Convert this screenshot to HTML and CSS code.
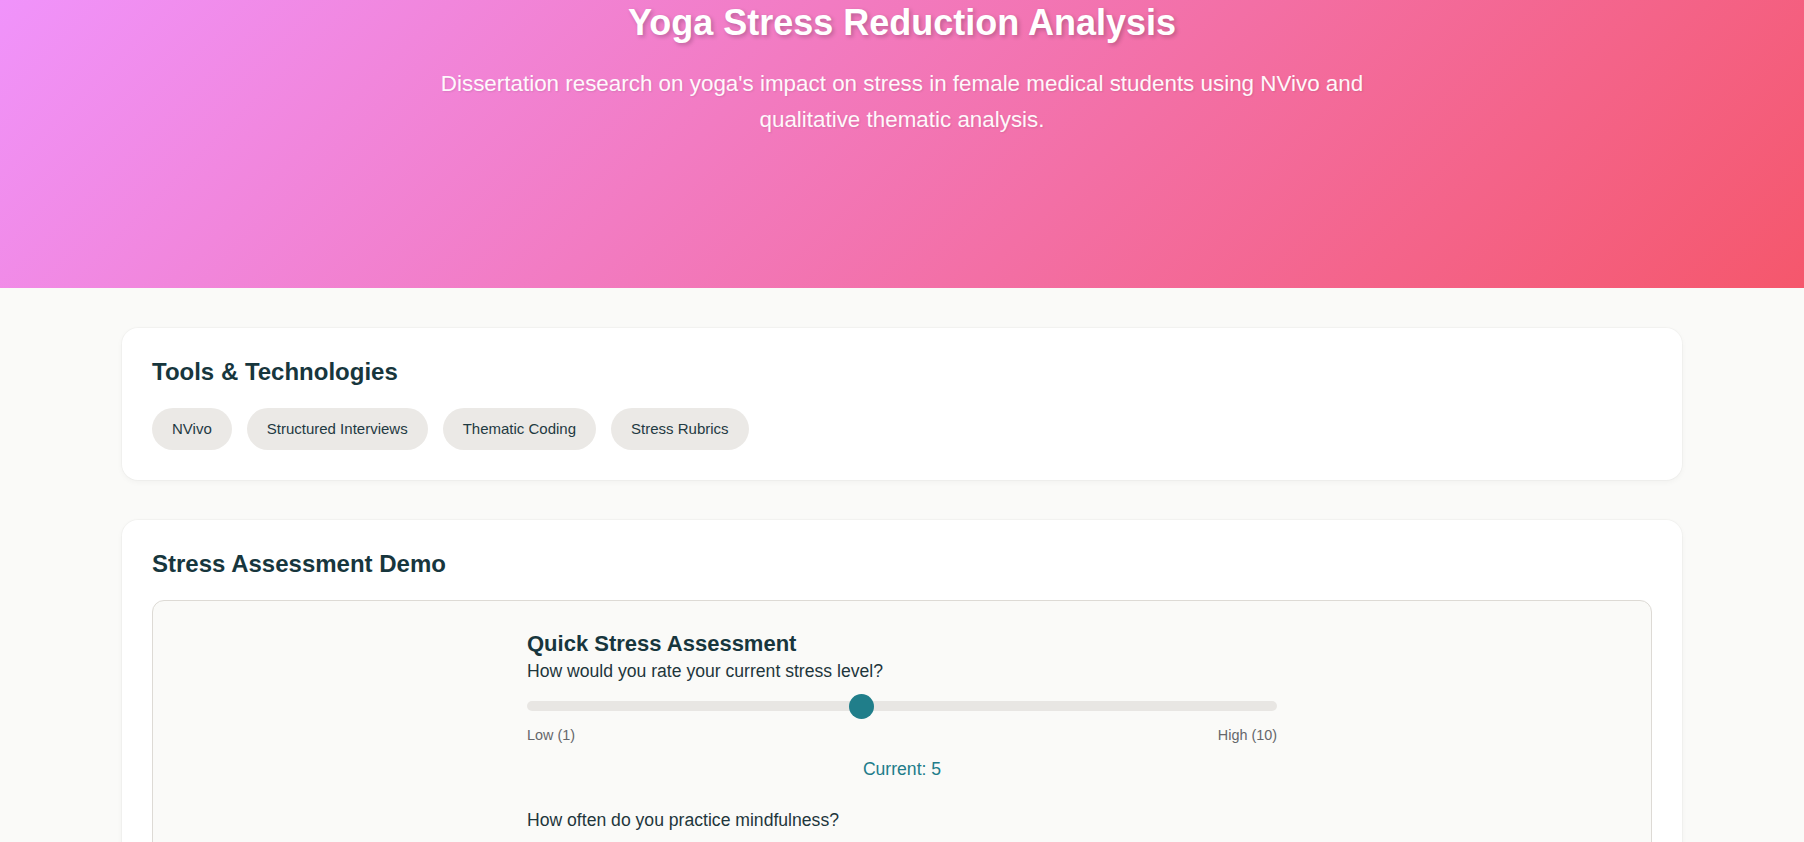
FILE: index.html
```html
<!DOCTYPE html>
<html lang="en">
<head>
<meta charset="UTF-8">
<title>Yoga Stress Reduction Analysis</title>
<link rel="stylesheet" href="styles.css">
</head>
<body>
<header class="hero">
  <h1 class="hero-title">Yoga Stress Reduction Analysis</h1>
  <p class="hero-subtitle">Dissertation research on yoga's impact on stress in female medical students using NVivo and qualitative thematic analysis.</p>
</header>

<main class="container">
  <section class="card">
    <h2 class="card-title">Tools &amp; Technologies</h2>
    <div class="tags">
      <span class="tag">NVivo</span>
      <span class="tag">Structured Interviews</span>
      <span class="tag">Thematic Coding</span>
      <span class="tag">Stress Rubrics</span>
    </div>
  </section>

  <section class="card">
    <h2 class="card-title">Stress Assessment Demo</h2>
    <div class="demo-box">
      <div class="assessment">
        <h3 class="assessment-title">Quick Stress Assessment</h3>
        <div class="question">
          <p class="question-label">How would you rate your current stress level?</p>
          <input class="slider" type="range" min="1" max="10" value="5">
          <div class="scale-labels">
            <span>Low (1)</span>
            <span>High (10)</span>
          </div>
          <div class="current-value">Current: 5</div>
        </div>
        <div class="question">
          <p class="question-label">How often do you practice mindfulness?</p>
        </div>
      </div>
    </div>
  </section>
</main>
</body>
</html>
```

FILE: styles.css
```css
* {
  box-sizing: border-box;
}

body {
  margin: 0;
  background: #fafaf8;
  font-family: "Liberation Sans", Arial, sans-serif;
  line-height: 1.6;
  color: #1b3a40;
}

.hero {
  height: 288px;
  padding: 1px 20px 0;
  background: linear-gradient(135deg, #f093fb 0%, #f5576c 100%);
  color: #ffffff;
  text-align: center;
}

.hero-title {
  margin: 0 0 22px;
  font-size: 36px;
  line-height: 1.2;
  font-weight: 700;
  text-shadow: 2px 2px 4px rgba(0, 0, 0, 0.22);
}

.hero-subtitle {
  max-width: 1000px;
  margin: 0 auto;
  font-size: 22.4px;
  line-height: 1.6;
  opacity: 0.95;
  text-shadow: 1px 1px 2px rgba(0, 0, 0, 0.1);
}

.container {
  max-width: 1560px;
  margin: 0 auto;
  padding: 40px 0;
}

.card {
  background: #ffffff;
  border-radius: 16px;
  padding: 30px;
  margin-bottom: 40px;
  box-shadow: 0 0 0 1px rgba(0, 0, 0, 0.025), 0 2px 6px rgba(0, 0, 0, 0.04);
}

.card-title {
  margin: 0 0 21px;
  font-size: 24px;
  line-height: 1.2;
  font-weight: 700;
  color: #17363d;
}

.tags {
  display: flex;
  flex-wrap: wrap;
  gap: 15px;
}

.tag {
  padding: 8px 20px;
  border-radius: 22px;
  background: #ebe9e6;
  color: #1f3a42;
  font-size: 15px;
  line-height: 26px;
}

.demo-box {
  border: 1px solid #dddad5;
  border-radius: 12px;
  background: #fafaf8;
  padding: 30px;
}

.assessment {
  max-width: 750px;
  margin: 0 auto;
}

.assessment-title {
  margin: 0;
  font-size: 22px;
  line-height: 1.2;
  font-weight: 700;
  color: #17363d;
}

.question {
  margin-bottom: 23px;
}

.question-label {
  margin: 0;
  font-size: 17.6px;
  line-height: 1.6;
  color: #1e363c;
}

.slider {
  -webkit-appearance: none;
  appearance: none;
  display: block;
  width: 100%;
  height: 10px;
  margin: 16px 0 0;
  border-radius: 5px;
  background: #e8e6e3;
  outline: none;
}

.slider::-webkit-slider-thumb {
  -webkit-appearance: none;
  appearance: none;
  width: 25px;
  height: 25px;
  border: none;
  border-radius: 50%;
  background: #207e8a;
  cursor: pointer;
}

.scale-labels {
  display: flex;
  justify-content: space-between;
  margin-top: 13px;
  font-size: 14.4px;
  color: #65676b;
}

.current-value {
  margin-top: 8px;
  text-align: center;
  font-size: 17.6px;
  color: #217c8a;
}
```
